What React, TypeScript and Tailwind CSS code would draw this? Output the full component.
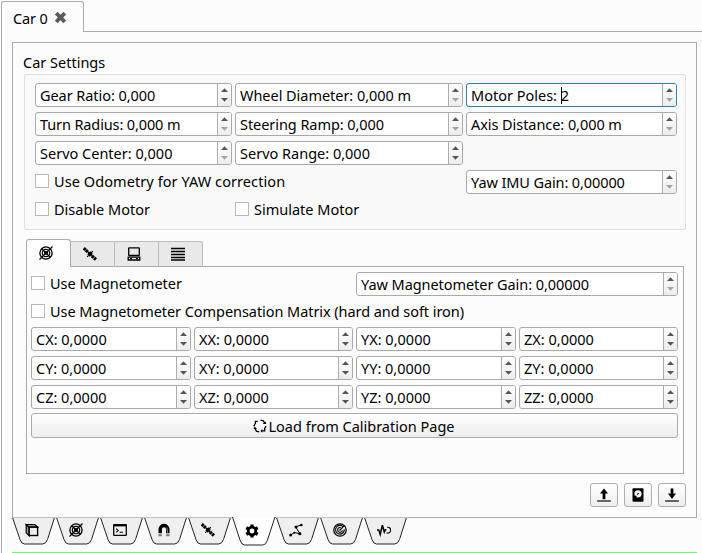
import type { ReactNode } from "react";

function Triangle({ up, dim }: { up?: boolean; dim?: boolean }) {
  return (
    <svg width="7" height="4" viewBox="0 0 7 4" className={dim ? "text-[#a3a3a3]" : "text-[#555]"}>
      <path d={up ? "M0 4L3.5 0.3L7 4Z" : "M0 0L3.5 3.7L7 0Z"} fill="currentColor" />
    </svg>
  );
}

type SpinProps = { text: ReactNode; down?: boolean; focus?: boolean; className?: string };

function Spin({ text, down = false, focus = false, className = "" }: SpinProps) {
  return (
    <div
      className={`flex h-6 overflow-hidden rounded-[3px] border bg-white ${focus ? "border-[#2b7fb3]" : "border-[#a9a9a9]"} ${className}`}
    >
      <div className="flex flex-1 items-center whitespace-nowrap pl-1">{text}</div>
      <div className="flex w-[14px] flex-col items-center justify-between border-l border-[#adadad] bg-linear-to-b from-white to-[#ededed] pt-1 pb-1">
        <Triangle up />
        <Triangle dim={!down} />
      </div>
    </div>
  );
}

function Check({ label, className = "" }: { label: string; className?: string }) {
  return (
    <div className={`flex h-[14px] items-center gap-[5px] whitespace-nowrap ${className}`}>
      <span className="size-[14px] shrink-0 border border-[#b8b8b8] bg-white" />
      <span>{label}</span>
    </div>
  );
}

function Icon({ size = 14, children }: { size?: number; children: ReactNode }) {
  return (
    <svg width={size} height={size} viewBox="0 0 14 14" fill="none" stroke="#000" strokeWidth="1.2">
      {children}
    </svg>
  );
}

const Target = () => (
  <Icon>
    <circle cx="7" cy="7" r="6.1" strokeWidth="1.3" />
    <circle cx="7" cy="7" r="3.7" strokeWidth="1.2" />
    <circle cx="7" cy="7" r="1.4" strokeWidth="1.3" />
    <path d="M0.5 13.5L13.5 0.5M3 3L11 11" strokeWidth="1.2" />
  </Icon>
);

const Satellite = () => (
  <Icon>
    <path d="M0.8 1.2L5 5.2M9 9L13.2 12.8" strokeWidth="3.2" strokeDasharray="2.4 0.5" />
    <path d="M4.8 4.8L9.2 9.2" strokeWidth="1.5" />
    <path d="M4.3 7.2L7.3 4.3L9.8 6.8L6.8 9.8Z" fill="#000" stroke="none" />
    <path d="M8.2 5.8L9.8 4.2M4.2 9.8L5.6 8.4" />
  </Icon>
);

const Computer = () => (
  <Icon>
    <rect x="1.7" y="0.8" width="10.6" height="7.7" rx="0.5" strokeWidth="1.3" />
    <path d="M1.2 10.2H12.8V13H1.2Z" strokeWidth="1.3" />
    <path d="M3 11.6H5M9 11.6H11" />
  </Icon>
);

const Lines = () => (
  <Icon>
    <path d="M0 1.5H14M0 4.5H14M0 7.5H14M0 10.5H14M0 13H14" strokeWidth="1.3" />
  </Icon>
);

const Cube = () => (
  <Icon>
    <path d="M1.2 1.5L4.2 4.2V12.8L1.2 9.8Z" fill="#999" />
    <path d="M1.2 1.5H9.8L12.8 4.2H4.2Z" fill="#999" />
    <rect x="4.2" y="4.2" width="8.4" height="8.3" fill="#efefef" strokeWidth="1.4" />
  </Icon>
);

const Terminal = () => (
  <Icon>
    <rect x="0.7" y="1.6" width="12.6" height="10.8" rx="0.6" strokeWidth="1.3" />
    <path d="M0.5 2.3H13.5" strokeWidth="2.2" />
    <path d="M3.2 5.7L5.2 7.5L3.2 9.3M6.6 9.2H10" strokeWidth="1.1" />
  </Icon>
);

const Magnet = () => (
  <Icon>
    <path d="M3.2 10.3V6A3.8 3.8 0 0 1 7 2.5A3.8 3.8 0 0 1 10.8 6V10.3" strokeWidth="3.4" />
    <path d="M1.5 12.2H4.9M9.1 12.2H12.5" stroke="#777" strokeWidth="2" />
    <path d="M9.8 4.5L10.8 10" stroke="#888" strokeWidth="0.9" />
  </Icon>
);

const Gear = () => (
  <Icon>
    <circle cx="7" cy="7" r="3.8" strokeWidth="2.7" />
    <path d="M7 0.4V3M7 11V13.6M1.3 3.7L3.5 5M10.5 9L12.7 10.3M1.3 10.3L3.5 9M10.5 5L12.7 3.7" strokeWidth="3.2" />
  </Icon>
);

const Graph = () => (
  <Icon>
    <path d="M1.5 12.2L5.3 9.5L11 10.8L6.5 3.8L12.3 2" strokeWidth="1" />
    <g fill="#000" stroke="none">
      <circle cx="1.7" cy="12" r="1.5" />
      <circle cx="5.3" cy="9.7" r="1" />
      <circle cx="10.8" cy="10.7" r="1.6" />
      <circle cx="7" cy="4" r="1.5" />
      <circle cx="12.4" cy="2" r="1.3" />
    </g>
  </Icon>
);

const Radar = () => (
  <Icon>
    <circle cx="7" cy="7" r="6.2" strokeWidth="1.3" />
    <path d="M10.2 3.8A4.4 4.4 0 1 0 11.3 6.3" strokeWidth="1.1" />
    <path d="M7.8 4.7A2.4 2.4 0 1 0 9.4 7.2M7 7L11.3 2.7" strokeWidth="1.1" />
    <circle cx="7" cy="7" r="0.8" fill="#000" stroke="none" />
  </Icon>
);

const Pulse = () => (
  <Icon>
    <path d="M0 7H1.8L3.2 11.5L5.4 2.2L7.3 9L8.3 6.8H9.4" strokeWidth="1.5" />
    <path d="M10.2 4.3A2.9 2.9 0 1 1 9.6 9.8" strokeWidth="1.2" />
  </Icon>
);

const Refresh = () => (
  <Icon>
    <path
      d="M2.4 5V2.4H4.8M7.4 1.2L10.4 1.8L11.7 4.2M13 7.2L11.7 9.4V11.8H9.2M6.2 12.8L3.4 12.2L2.2 9.8M0.8 7.4L2 5"
      strokeWidth="1.3"
    />
    <path d="M9.6 4.9H13.2L12.6 2.4ZM9.4 10V13.7L7.4 11.9ZM0.2 10L1.9 7.8L4 9.9Z" fill="#000" stroke="none" />
  </Icon>
);

const Arrow = ({ down }: { down?: boolean }) => (
  <Icon>
    <path
      d={down ? "M5.6 0.5H8.4V5.5H11L7 11L3 5.5H5.6Z" : "M5.6 11.2H8.4V5.5H11L7 0.5L3 5.5H5.6Z"}
      fill="#000"
      stroke="none"
    />
    <path d="M0.2 13H13.8" stroke="#555" strokeWidth="1.8" />
  </Icon>
);

const Disk = () => (
  <Icon>
    <rect x="1.5" y="0.3" width="11" height="13.4" rx="1" fill="#000" stroke="none" />
    <circle cx="7" cy="5.8" r="3.6" fill="#f4f4f4" stroke="none" />
    <path d="M6.3 6.8L7 5.2L8 6" strokeWidth="0.9" />
    <path d="M3 10.8L5.2 7.8" strokeWidth="1.5" />
  </Icon>
);

function BottomTab({ active, children }: { active?: boolean; children: ReactNode }) {
  return (
    <div className={`relative flex h-[29px] w-11 justify-center ${active ? "z-10 pt-[7px]" : "pt-[6px]"}`}>
      <svg className="absolute top-0 left-0" width="44" height="29" viewBox="0 0 44 29" fill="none">
        <path
          d={
            active
              ? "M0.5 0L8 23Q9.5 28 12.5 28H31Q34 28 35.5 23L43 0"
              : "M0.5 0.5L8 22.5Q9.5 27 12.5 27H30.5Q34 27 35.5 22.5L42.5 0.5"
          }
          fill={active ? "#fff" : "#efefef"}
          stroke="#222"
        />
        {!active && <path d="M0 0.5H44" stroke="#c0c0c0" />}
      </svg>
      <div className="relative -left-[2px] h-[14px]">{children}</div>
    </div>
  );
}

function ToolButton({ children }: { children: ReactNode }) {
  return (
    <button className="flex h-6 w-7 items-center justify-center rounded-[3px] border border-[#adadad] bg-linear-to-b from-white to-[#eee]">
      {children}
    </button>
  );
}

const matrix = ["CX", "XX", "YX", "ZX", "CY", "XY", "YY", "ZY", "CZ", "XZ", "YZ", "ZZ"];

export default function App() {
  return (
    <div className="flex h-[553px] w-[702px] flex-col overflow-hidden bg-[#fcfcfc] pt-px pl-px font-['Noto_Sans',sans-serif] text-[14.5px] leading-5 text-black">
      <div className="flex h-[31px] shrink-0">
        <div className="flex w-[83px] items-center gap-[6px] rounded-t-[3px] border border-b-0 border-[#ababab] pl-[11px]">
          <span className="whitespace-nowrap pt-[2px] tracking-[-0.15px]">Car 0</span>
          <svg width="13" height="13" viewBox="0 0 13 13">
            <path d="M2.2 2.2L10.8 10.8M10.8 2.2L2.2 10.8" stroke="#5a5a5a" strokeWidth="3.8" />
          </svg>
        </div>
        <div className="flex-1 border-b border-[#ababab]" />
      </div>

      <div className="flex flex-1 flex-col border-l border-[#ababab] pt-[10px] pl-[10px]">
        <div className="flex h-[476px] w-[685px] shrink-0 flex-col border border-[#ababab] pt-[9px] pl-[10px]">
          <div className="h-[22px]">Car Settings</div>

          <section className="ml-px h-[156px] w-[662px] rounded-[2px] border border-[#dfdfdf] bg-[#f9f9f9] pt-2 pl-[10px]">
            <div className="grid w-[642px] grid-cols-[197px_228px_211px] gap-x-[3px] gap-y-[5px]">
              <Spin text="Gear Ratio: 0,000" down className="tracking-[-0.06px]" />
              <Spin text="Wheel Diameter: 0,000 m" className="tracking-[-0.04px]" />
              <Spin
                focus
                text={
                  <>
                    Motor Poles:&nbsp;<span className="h-[17px] w-px bg-black" />
                    <span className="-ml-px">2</span>
                  </>
                }
              />
              <Spin text="Turn Radius: 0,000 m" className="tracking-[-0.12px]" />
              <Spin text="Steering Ramp: 0,000" className="tracking-[-0.06px]" />
              <Spin text="Axis Distance: 0,000 m" className="tracking-[-0.06px]" />
              <Spin text="Servo Center: 0,000" />
              <Spin text="Servo Range: 0,000" down />
              <span />
              <Check label="Use Odometry for YAW correction" className="col-span-2 mt-1 tracking-[0.08px]" />
              <Spin text="Yaw IMU Gain: 0,00000" className="tracking-[-0.1px]" />
            </div>
            <div className="mt-2 grid grid-cols-[200px_1fr]">
              <Check label="Disable Motor" />
              <Check label="Simulate Motor" />
            </div>
          </section>

          <div className="mt-[9px] ml-[3px] flex h-[28px] w-[658px] items-end">
            <div className="flex h-[28px] w-[45px] justify-center rounded-t-[3px] border border-b-0 border-[#ababab] bg-linear-to-b from-white to-[#fcfcfc] pt-[6px] pr-[5px]">
              <Target />
            </div>
            {[Satellite, Computer, Lines].map((Glyph, i) => (
              <div
                key={i}
                className="flex h-[26px] w-11 justify-center border-t border-r border-b border-t-[#bcbcbc] border-r-[#bcbcbc] border-b-[#ababab] bg-[#e9e9e9] pt-[5px] pr-[5px] nth-[4]:rounded-tr-[3px]"
              >
                <Glyph />
              </div>
            ))}
            <div className="h-px flex-1 bg-[#ababab]" />
          </div>
          <div className="ml-[3px] h-[207px] w-[658px] border border-t-0 border-[#ababab] pt-[5px] pl-1">
            <div className="flex w-[647px] items-start justify-between">
              <Check label="Use Magnetometer" className="mt-1" />
              <Spin text="Yaw Magnetometer Gain: 0,00000" className="w-[322px] tracking-[-0.06px]" />
            </div>
            <Check
              label="Use Magnetometer Compensation Matrix (hard and soft iron)"
              className="mt-2 tracking-[-0.06px]"
            />
            <div className="mt-[9px] grid w-[647px] grid-cols-[160px_159px_160px_159px] gap-x-[3px] gap-y-[5px]">
              {matrix.map((name) => (
                <Spin key={name} text={`${name}: 0,0000`} down />
              ))}
            </div>
            <button className="mt-1 flex h-[25px] w-[647px] items-center justify-center gap-[2px] rounded-[3px] border border-[#ababab] bg-linear-to-b from-white to-[#ededed] pr-[2px]">
              <Refresh />
              <span>Load from Calibration Page</span>
            </button>
          </div>

          <div className="mt-[9px] mr-[10px] flex justify-end gap-[6px]">
            <ToolButton>
              <Arrow />
            </ToolButton>
            <ToolButton>
              <Disk />
            </ToolButton>
            <ToolButton>
              <Arrow down />
            </ToolButton>
          </div>
        </div>

        <div className="-mt-px flex h-[36px] w-[685px] shrink-0 border-b border-b-[#82e882]">
          {[Cube, Target, Terminal, Magnet, Satellite, Gear, Graph, Radar, Pulse].map((Glyph, i) => (
            <BottomTab key={i} active={i === 5}>
              <Glyph />
            </BottomTab>
          ))}
        </div>
      </div>
    </div>
  );
}
